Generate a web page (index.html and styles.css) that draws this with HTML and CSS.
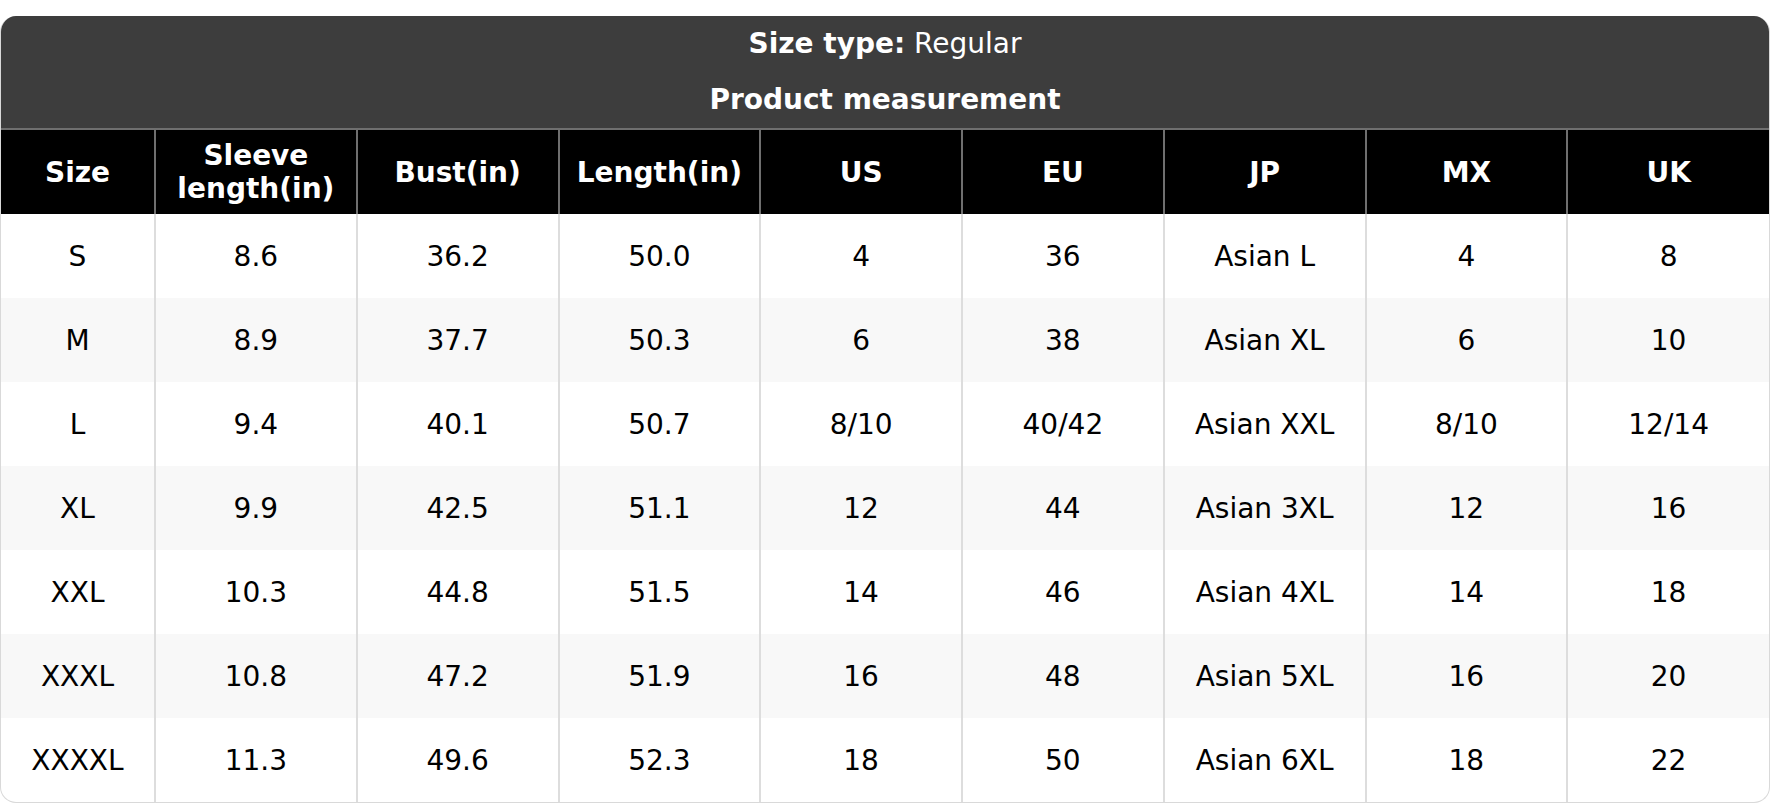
FILE: index.html
```html
<!DOCTYPE html>
<html lang="en">
<head>
<meta charset="utf-8">
<title>Size chart</title>
<link rel="stylesheet" href="styles.css">
</head>
<body>
<div class="page">
  <div class="card">
    <div class="card-head">
      <div class="head-line"><strong>Size type:</strong> Regular</div>
      <div class="head-line"><strong>Product measurement</strong></div>
    </div>
    <table class="chart">
      <colgroup>
        <col class="c-size">
        <col><col><col><col><col><col><col><col>
      </colgroup>
      <thead>
        <tr>
          <th>Size</th>
          <th>Sleeve<br>length(in)</th>
          <th>Bust(in)</th>
          <th>Length(in)</th>
          <th>US</th>
          <th>EU</th>
          <th>JP</th>
          <th>MX</th>
          <th>UK</th>
        </tr>
      </thead>
      <tbody>
        <tr><td>S</td><td>8.6</td><td>36.2</td><td>50.0</td><td>4</td><td>36</td><td>Asian L</td><td>4</td><td>8</td></tr>
        <tr><td>M</td><td>8.9</td><td>37.7</td><td>50.3</td><td>6</td><td>38</td><td>Asian XL</td><td>6</td><td>10</td></tr>
        <tr><td>L</td><td>9.4</td><td>40.1</td><td>50.7</td><td>8/10</td><td>40/42</td><td>Asian XXL</td><td>8/10</td><td>12/14</td></tr>
        <tr><td>XL</td><td>9.9</td><td>42.5</td><td>51.1</td><td>12</td><td>44</td><td>Asian 3XL</td><td>12</td><td>16</td></tr>
        <tr><td>XXL</td><td>10.3</td><td>44.8</td><td>51.5</td><td>14</td><td>46</td><td>Asian 4XL</td><td>14</td><td>18</td></tr>
        <tr><td>XXXL</td><td>10.8</td><td>47.2</td><td>51.9</td><td>16</td><td>48</td><td>Asian 5XL</td><td>16</td><td>20</td></tr>
        <tr><td>XXXXL</td><td>11.3</td><td>49.6</td><td>52.3</td><td>18</td><td>50</td><td>Asian 6XL</td><td>18</td><td>22</td></tr>
      </tbody>
    </table>
  </div>
</div>
</body>
</html>
```
FILE: styles.css
```css
html, body {
  margin: 0;
  padding: 0;
  background: #ffffff;
}

.page {
  padding-top: 16px;
  font-family: "DejaVu Sans", Verdana, sans-serif;
  font-size: 28px;
  color: #000000;
}

.card {
  border: 1px solid #d9d9d9;
  border-top: none;
  border-radius: 16px;
  overflow: hidden;
  background: #ffffff;
}

.card-head {
  background: #3d3d3d;
  color: #ffffff;
  text-align: center;
  padding: 0;
}

.head-line {
  height: 56px;
  line-height: 56px;
}

.head-line strong {
  font-weight: bold;
}

.chart {
  width: 100%;
  border-collapse: collapse;
  table-layout: fixed;
}

.c-size {
  width: 154px;
}

.chart th {
  background: #000000;
  color: #ffffff;
  font-weight: bold;
  height: 84px;
  line-height: 33px;
  padding: 0 4px;
  border-left: 2px solid #6f6f6f;
  border-top: 2px solid #6f6f6f;
  text-align: center;
  vertical-align: middle;
}

.chart td {
  height: 84px;
  padding: 0 4px;
  text-align: center;
  vertical-align: middle;
  border-left: 2px solid #dddddd;
}

.chart th:first-child,
.chart td:first-child {
  border-left: none;
}

.chart tbody tr:nth-child(even) td {
  background: #f8f8f8;
}
```
